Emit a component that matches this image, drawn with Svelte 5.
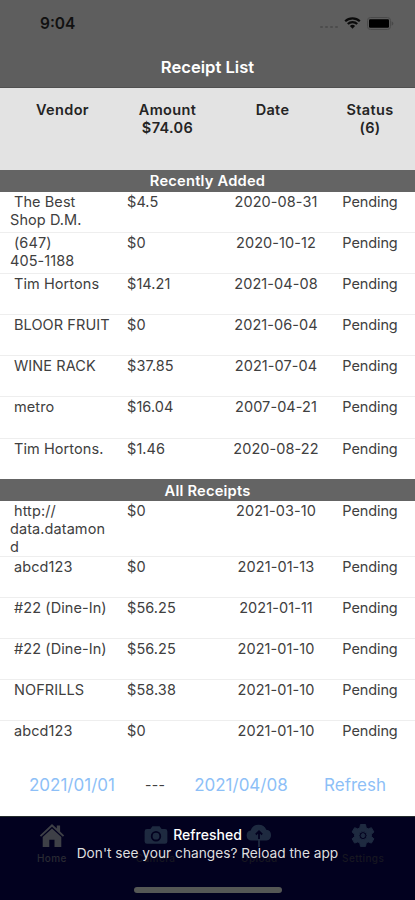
<script lang="ts">
	type Receipt = { vendor: string; amount: string; date: string; status: string };

	const toReceipt = ([vendor, amount, date]: string[]): Receipt => ({
		vendor,
		amount,
		date,
		status: 'Pending'
	});

	const sections: { title: string; receipts: Receipt[] }[] = [
		{
			title: 'Recently Added',
			receipts: [
				['The Best\nShop D.M.', '$4.5', '2020-08-31'],
				['(647)\n405-1188', '$0', '2020-10-12'],
				['Tim Hortons', '$14.21', '2021-04-08'],
				['BLOOR FRUIT', '$0', '2021-06-04'],
				['WINE RACK', '$37.85', '2021-07-04'],
				['metro', '$16.04', '2007-04-21'],
				['Tim Hortons.', '$1.46', '2020-08-22']
			].map(toReceipt)
		},
		{
			title: 'All Receipts',
			receipts: [
				['http://\ndata.datamon\nd', '$0', '2021-03-10'],
				['abcd123', '$0', '2021-01-13'],
				['#22 (Dine-In)', '$56.25', '2021-01-11'],
				['#22 (Dine-In)', '$56.25', '2021-01-10'],
				['NOFRILLS', '$58.38', '2021-01-10'],
				['abcd123', '$0', '2021-01-10']
			].map(toReceipt)
		}
	];

	let from = $state('2021/01/01');
	let to = $state('2021/04/08');
</script>

<div class="screen">
	<header class="top">
		<div class="status-bar">
			<span class="time">9:04</span>
			<div class="indicators">
				<span class="signal"><i></i><i></i><i></i><i></i></span>
				<svg class="wifi" viewBox="0 0 17 12" width="17" height="12">
					<path d="M1.2 4.3a10.4 10.4 0 0 1 14.6 0M3.8 7a6.7 6.7 0 0 1 9.4 0" />
					<path class="dot" d="M8.5 11.8 5.9 9.1a3.7 3.7 0 0 1 5.2 0z" />
				</svg>
				<svg class="battery" viewBox="0 0 27 13" width="27" height="13">
					<rect class="case" x="0.5" y="0.5" width="23" height="12" rx="3" />
					<rect x="2" y="2.3" width="20" height="8.4" rx="1.2" />
					<path class="tip" d="M24.7 4.2v4.6q1.6-.7 1.6-2.3t-1.6-2.3z" />
				</svg>
			</div>
		</div>
		<h1>Receipt List</h1>
	</header>

	<div class="columns">
		<span>Vendor</span>
		<span>Amount<br />$74.06</span>
		<span>Date</span>
		<span>Status<br />(6)</span>
	</div>

	{#each sections as section}
		<section>
			<h2>{section.title}</h2>
			{#each section.receipts as receipt}
				<div class="row">
					<span class="vendor">{receipt.vendor}</span>
					<span class="amount">{receipt.amount}</span>
					<span class="date">{receipt.date}</span>
					<span class="status">{receipt.status}</span>
				</div>
			{/each}
		</section>
	{/each}

	<div class="range">
		<button>{from}</button>
		<span class="dash">---</span>
		<button>{to}</button>
		<button class="refresh">Refresh</button>
	</div>

	<footer>
		<nav>
			<div class="tab home">
				<svg viewBox="0 0 26 26" width="26" height="26">
					<path d="M13 1 0.8 12.5l1.3 1.3L13 3.7l10.9 10.1 1.3-1.3-4.1-3.9V2.5h-3.3v3z" />
					<path d="M13 5.5 3.7 14v10h6.6v-7.2h5.2V24h6.8V14z" />
				</svg>
				<span>Home</span>
			</div>
			<div class="tab">
				<svg viewBox="0 0 26 26" width="26" height="26">
					<path
						fill-rule="evenodd"
						d="M4 6h3.4l2-2.8h7.2l2 2.8H22q2.4 0 2.4 2.4v10q0 2.4-2.4 2.4H4q-2.4 0-2.4-2.4v-10Q1.6 6 4 6zm9 2a5.2 5.2 0 1 0 0 10.4 5.2 5.2 0 0 0 0-10.4zm0 1.8a3.4 3.4 0 1 1 0 6.8 3.4 3.4 0 0 1 0-6.8z"
					/>
				</svg>
				<span>Camera</span>
			</div>
			<div class="tab">
				<svg viewBox="0 0 26 26" width="26" height="26">
					<path
						d="M5.5 17.5a5 5 0 0 1-.8-9.900A8.300 8.300 0 0 1 20.300 6.800 5.400 5.400 0 0 1 20.500 17.500h-6.600V24h-1.800v-6.500z"
					/>
					<path class="arrow" d="M13 16V8.500M9.800 11.500 13 8.300l3.200 3.200" />
				</svg>
				<span>Upload</span>
			</div>
			<div class="tab">
				<svg viewBox="0 0 26 26" width="26" height="26">
					<path
						class="gear"
						fill-rule="evenodd"
						d="M10.5 1.500h5l.7 3.300 2 1.100 3.200-1.200 2.500 4.300-2.500 2.200v2.400l2.500 2.200-2.500 4.300-3.200-1.200-2 1.100-.7 3.400h-5l-.7-3.400-2-1.100-3.200 1.200-2.500-4.300 2.500-2.200v-2.400L2.100 9l2.500-4.300 3.200 1.200 2-1.100zM13 8.600a4 4 0 1 0 0 8 4 4 0 0 0 0-8zm0 2a2 2 0 1 1 0 4 2 2 0 0 1 0-4z"
					/>
				</svg>
				<span>Settings</span>
			</div>
		</nav>
		<div class="toast">
			<strong>Refreshed</strong>
			<span>Don't see your changes? Reload the app</span>
		</div>
		<div class="home-indicator"></div>
	</footer>
</div>

<style>
	:global(body) {
		margin: 0;
		background: #fff;
	}
	.screen {
		display: flex;
		flex-direction: column;
		width: 415px;
		height: 900px;
		overflow: hidden;
		background: #fff;
		color: #404040;
		font-family: Inter, Roboto, sans-serif;
		font-size: 15px;
		line-height: 18px;
	}
	.top {
		height: 88px;
		flex: none;
		box-sizing: border-box;
		background: #5e5e5e;
		border-bottom: 1px solid #505050;
	}
	.status-bar {
		display: flex;
		justify-content: space-between;
		align-items: center;
		height: 46px;
		padding: 0 21px 0 40px;
		color: #111;
	}
	.time {
		padding-top: 1px;
		font-size: 15.5px;
		font-weight: 600;
	}
	.indicators {
		display: flex;
		align-items: center;
	}
	.signal {
		display: flex;
		gap: 2px;
		margin: 8px 6px 0 0;
	}
	.signal i {
		width: 3px;
		height: 2px;
		border-radius: 1px;
		background: #4c4c4c;
	}
	.wifi {
		margin-right: 6px;
		fill: none;
		stroke: #0b0b0b;
		stroke-width: 2.2;
	}
	.dot {
		fill: #0b0b0b;
		stroke: none;
	}
	.case {
		fill: none;
		stroke: #4a4a4a;
	}
	.tip {
		fill: #484848;
	}
	h1 {
		margin: 0;
		padding-top: 9px;
		color: #fff;
		font-size: 16.6px;
		font-weight: 600;
		line-height: 24px;
		text-align: center;
	}
	.columns {
		display: grid;
		grid-template-columns: 105px 105px 105px 90px;
		box-sizing: border-box;
		height: 82px;
		flex: none;
		padding: 13px 0 0 10px;
		background: #e3e3e3;
		color: #242424;
		font-size: 14.5px;
		font-weight: 600;
		letter-spacing: 0.35px;
		text-align: center;
	}
	h2 {
		margin: 0;
		background: #646464;
		color: #fff;
		font-size: 14.7px;
		font-weight: 600;
		letter-spacing: 0.2px;
		line-height: 23px;
		height: 22px;
		text-align: center;
	}
	section + section h2 {
		padding-top: 1px;
		height: 21px;
	}
	.row {
		display: grid;
		grid-template-columns: 106px 105px 110px 78px;
		box-sizing: border-box;
		min-height: 41.1px;
		padding: 1px 6px 0 10px;
		border-bottom: 1px solid #eee;
		font-size: 14.5px;
		letter-spacing: 0.08px;
	}
	.row:last-child {
		min-height: 40.4px;
		border-bottom-color: transparent;
	}
	.vendor {
		text-indent: 4px;
		white-space: pre-line;
	}
	.amount {
		padding-left: 11px;
	}
	.date,
	.status {
		text-align: center;
	}
	.status {
		letter-spacing: -0.1px;
	}
	.range {
		display: flex;
		align-items: center;
		flex: 1;
		padding: 0 29px 7px;
		font-size: 17px;
	}
	.dash {
		margin: 0 29px 0 30px;
		font-size: 14px;
		letter-spacing: 0.3px;
	}
	.refresh {
		margin-left: auto;
	}
	button {
		padding: 0;
		border: none;
		background: none;
		color: #8dbff7;
		font: inherit;
	}
	footer {
		position: relative;
		box-sizing: border-box;
		height: 84px;
		flex: none;
		border-top: 1px solid #242c2c;
		background: #02011f;
	}
	nav {
		display: grid;
		grid-template-columns: repeat(4, 1fr);
		padding-top: 6px;
	}
	.tab {
		display: flex;
		flex-direction: column;
		align-items: center;
		color: #171721;
		font-size: 10px;
		font-weight: 500;
		letter-spacing: 0.4px;
	}
	.tab svg {
		fill: #1e2a40;
	}
	.tab.home svg {
		fill: #3e4047;
	}
	.tab.home {
		color: #292a33;
	}
	.tab .arrow {
		fill: none;
		stroke: #02011f;
		stroke-width: 1.8;
	}
	.gear {
		stroke: #1e2a40;
		stroke-width: 1;
		stroke-linejoin: round;
	}
	.toast {
		position: absolute;
		inset: 9px 0 auto;
		display: flex;
		flex-direction: column;
		align-items: center;
		color: #dededf;
		font-size: 13.7px;
	}
	.toast strong {
		color: #fff;
		font-size: 14px;
		font-weight: 500;
	}
	.home-indicator {
		position: absolute;
		bottom: 7px;
		left: 134px;
		width: 148px;
		height: 6px;
		border-radius: 3px;
		background: #555755;
	}
</style>
